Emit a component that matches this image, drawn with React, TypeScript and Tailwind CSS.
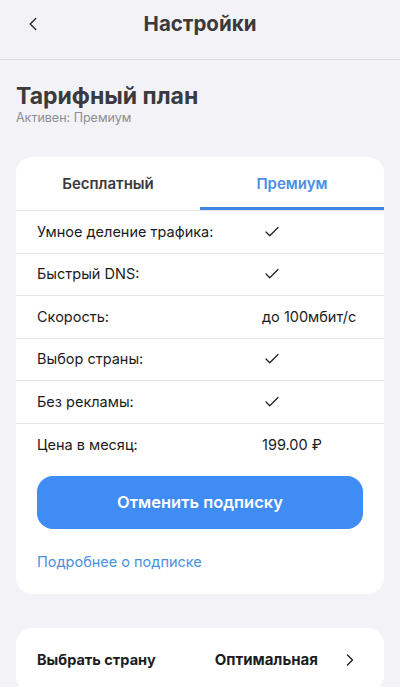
import { ChevronLeft, ChevronRight, Check } from 'lucide-react';

type Row = { label: string; value?: string };

const rows: Row[] = [
  { label: 'Умное деление трафика:' },
  { label: 'Быстрый DNS:' },
  { label: 'Скорость:', value: 'до 100мбит/с' },
  { label: 'Выбор страны:' },
  { label: 'Без рекламы:' },
  { label: 'Цена в месяц:', value: '199.00 ₽' },
];

const PlanRow = ({ row, last }: { row: Row; last: boolean }) => (
  <div
    className={`flex items-center h-[42.5px] pl-[21px] ${last ? '' : 'border-b border-[#e5e5ea]'}`}
  >
    <span className="w-[225px] text-[14.5px] text-[#1c1c1e]">{row.label}</span>
    {row.value ? (
      <span className="text-[14.5px] text-[#1c1c1e]">{row.value}</span>
    ) : (
      <Check size={18} strokeWidth={1.6} className="text-[#1c1c1e] ml-[1px]" />
    )}
  </div>
);

export default function App() {
  return (
    <div
      className="w-[400px] h-[687px] overflow-hidden bg-[#f2f2f7]"
      style={{ fontFamily: 'Inter, "Noto Sans", sans-serif' }}
    >
      <header className="relative flex items-center justify-center h-[60px] border-b border-[#dcdce0]">
        <ChevronLeft
          size={22}
          strokeWidth={1.6}
          className="absolute left-[22px] top-[13px] text-[#2c2c2e]"
        />
        <h1 className="text-[20.5px] font-bold text-[#3a3a3c] -mt-[10px]">Настройки</h1>
      </header>

      <section className="px-4 pt-[22px]">
        <h2 className="text-[23px] leading-[29px] font-bold text-[#3a3a3c]">Тарифный план</h2>
        <p className="text-[12.5px] leading-[14px] text-[#8e8e93]">Активен: Премиум</p>
      </section>

      <div className="mx-4 mt-[32px] bg-white rounded-[16px] overflow-hidden">
        <div className="flex h-[54px] border-b border-[#e5e5ea]">
          <div className="flex-1 flex items-center justify-center text-[15px] font-semibold text-[#3a3a3c] pt-[2px]">
            Бесплатный
          </div>
          <div className="flex-1 relative flex items-center justify-center text-[15px] font-semibold text-[#4a8fe2] pt-[2px]">
            Премиум
            <span className="absolute left-0 right-0 bottom-0 h-[3px] bg-[#3f86e0]" />
          </div>
        </div>

        {rows.map((row, i) => (
          <PlanRow key={row.label} row={row} last={i === rows.length - 1} />
        ))}

        <div className="px-[21px] pt-[10px]">
          <button className="w-full h-[53px] rounded-[16px] bg-[#3f8cf5] text-white text-[16.5px] font-semibold">
            Отменить подписку
          </button>
        </div>

        <div className="px-[21px] pt-[20px] pb-[21px]">
          <span className="text-[14.5px] text-[#4a8fe2]">Подробнее о подписке</span>
        </div>
      </div>

      <div className="mx-4 mt-[34px] bg-white rounded-[16px] flex items-center h-[64px] pl-[21px] pr-[24px]">
        <span className="flex-1 text-[14.5px] font-bold text-[#1c1c1e]">Выбрать страну</span>
        <span className="text-[15px] font-bold text-[#1c1c1e] mr-[22px]">Оптимальная</span>
        <ChevronRight size={20} strokeWidth={1.6} className="text-[#1c1c1e]" />
      </div>
    </div>
  );
}
